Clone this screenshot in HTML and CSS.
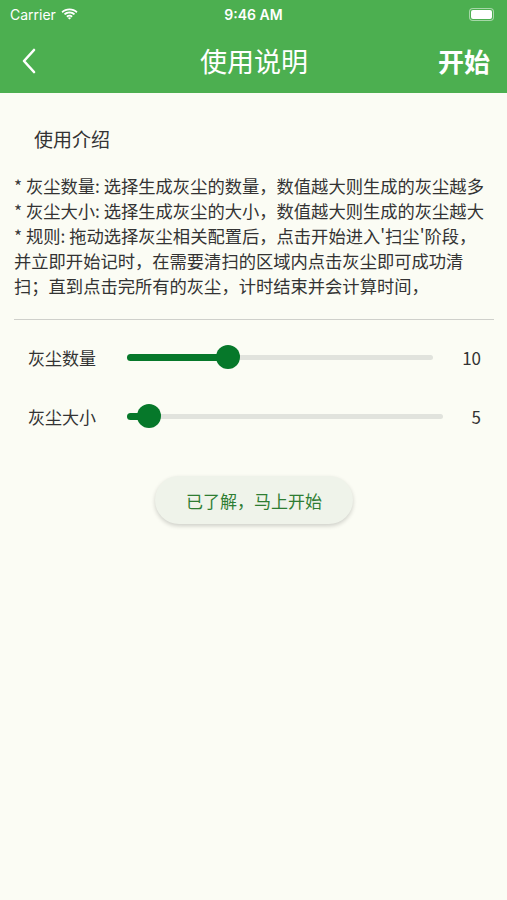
FILE: index.html
```html
<!DOCTYPE html>
<html lang="zh">
  <head>
    <meta charset="UTF-8" />
    <meta name="viewport" content="width=device-width, initial-scale=1.0" />
    <title>使用说明</title>
    <link rel="stylesheet" href="styles.css">
  </head>
  <body>
    <header class="top">
      <div class="status">
        <span class="carrier">Carrier
          <svg class="wifi" width="17" height="12" viewBox="0 0 17 12">
            <path d="M8.5 2.2c2.6 0 5 1 6.8 2.7l1.2-1.3C14.4 1.6 11.6.4 8.5.4S2.6 1.6.5 3.6l1.2 1.3C3.5 3.2 5.9 2.2 8.5 2.2z" fill="#fff"/>
            <path d="M8.5 5.4c1.7 0 3.2.6 4.4 1.7l1.2-1.3C12.6 4.4 10.6 3.6 8.5 3.6S4.4 4.4 2.9 5.8l1.2 1.3c1.2-1.1 2.7-1.7 4.4-1.7z" fill="#fff"/>
            <path d="M8.5 8.6c.8 0 1.5.3 2 .8l1.2-1.3c-.9-.8-2-1.3-3.2-1.3s-2.3.5-3.2 1.3l1.2 1.3c.5-.5 1.2-.8 2-.8zM8.5 11.6l1.6-1.7c-.4-.4-1-.6-1.6-.6s-1.2.2-1.6.6z" fill="#fff"/>
          </svg>
        </span>
        <span class="time">9:46 AM</span>
        <span class="battery"><span class="battery-level"></span></span>
      </div>
      <nav class="nav">
        <svg class="back" width="14" height="26" viewBox="0 0 14 26">
          <path d="M12 2 L2 13 L12 24" fill="none" stroke="#fff" stroke-width="2.6" stroke-linecap="round" stroke-linejoin="round"/>
        </svg>
        <h1 class="title">使用说明</h1>
        <span class="start">开始</span>
      </nav>
    </header>

    <main class="content">
      <h2 class="intro-title">使用介绍</h2>
      <p class="intro">* 灰尘数量: 选择生成灰尘的数量，数值越大则生成的灰尘越多<br>* 灰尘大小: 选择生成灰尘的大小，数值越大则生成的灰尘越大<br>* 规则: 拖动选择灰尘相关配置后，点击开始进入'扫尘'阶段，并立即开始记时，在需要清扫的区域内点击灰尘即可成功清扫；直到点击完所有的灰尘，计时结束并会计算时间，</p>
      <hr class="divider">

      <div class="setting">
        <span class="setting-label">灰尘数量</span>
        <div class="slider">
          <div class="slider-fill" style="width: 101px"></div>
          <div class="slider-thumb" style="left: 101px"></div>
        </div>
        <span class="setting-value">10</span>
      </div>
      <div class="setting">
        <span class="setting-label">灰尘大小</span>
        <div class="slider">
          <div class="slider-fill" style="width: 22px"></div>
          <div class="slider-thumb" style="left: 22px"></div>
        </div>
        <span class="setting-value">5</span>
      </div>

      <div class="actions">
        <button class="go" type="button">已了解，马上开始</button>
      </div>
    </main>
  </body>
</html>
```

FILE: styles.css
```css
body {
  margin: 0;
  min-height: 100vh;
  background: #fbfcf4;
  color: #333;
  font-family: "Noto Sans CJK SC", "Noto Sans", sans-serif;
}

.top {
  background: #4caf50;
  color: #fff;
}

.status {
  height: 28px;
  padding: 0 10px;
  display: flex;
  align-items: center;
  justify-content: space-between;
  font-family: Inter, "Liberation Sans", sans-serif;
  font-size: 14px;
}

.carrier {
  flex: 1;
  display: flex;
  align-items: center;
  gap: 5px;
}

.time {
  font-weight: 600;
}

.battery {
  flex: 1;
  display: flex;
  justify-content: flex-end;
}

.battery-level {
  width: 21px;
  height: 9px;
  border: 1.5px solid rgba(255, 255, 255, 0.5);
  border-radius: 4px;
  background: #fff;
  background-clip: content-box;
  padding: 1px;
  margin-right: 3px;
}

.nav {
  height: 65px;
  padding: 0 17px 0 22px;
  display: flex;
  align-items: center;
  justify-content: space-between;
}

.back {
  width: 14px;
}

.title {
  margin: 0 0 0 34px;
  font-size: 27px;
  font-weight: 400;
}

.start {
  font-size: 26px;
  font-weight: 700;
}

.content {
  padding: 32px 13px 0 14px;
}

.intro-title {
  margin: 0 0 20px 20px;
  font-size: 19px;
  font-weight: 400;
  line-height: 28px;
}

.intro {
  margin: 0 4px 0 0;
  font-size: 17.3px;
  line-height: 25px;
  color: #333;
}

.divider {
  margin: 21px 0 20px;
  border: 0;
  border-top: 1px solid #cfd0cb;
}

.setting {
  height: 34px;
  margin-bottom: 25px;
  padding: 0 13px 0 14px;
  display: flex;
  align-items: center;
  font-size: 17px;
}

.setting-label {
  width: 99px;
}

.slider {
  flex: 1;
  height: 5px;
  border-radius: 3px;
  background: #e1e3dd;
  position: relative;
}

.slider-fill {
  height: 7px;
  margin-top: -1px;
  border-radius: 4px;
  background: #06782a;
}

.slider-thumb {
  position: absolute;
  top: 50%;
  width: 24px;
  height: 24px;
  margin: -12px 0 0 -12px;
  border-radius: 50%;
  background: #06782a;
}

.setting-value {
  margin-left: 29px;
}

.actions {
  padding-top: 18px;
  display: flex;
  justify-content: center;
}

.go {
  width: 198px;
  height: 48px;
  border: 0;
  border-radius: 24px;
  background: #eff3ea;
  box-shadow: 0 2px 4px rgba(0, 0, 0, 0.18);
  color: #2e7d32;
  font-family: "Noto Sans CJK SC", sans-serif;
  font-size: 17px;
}
```
